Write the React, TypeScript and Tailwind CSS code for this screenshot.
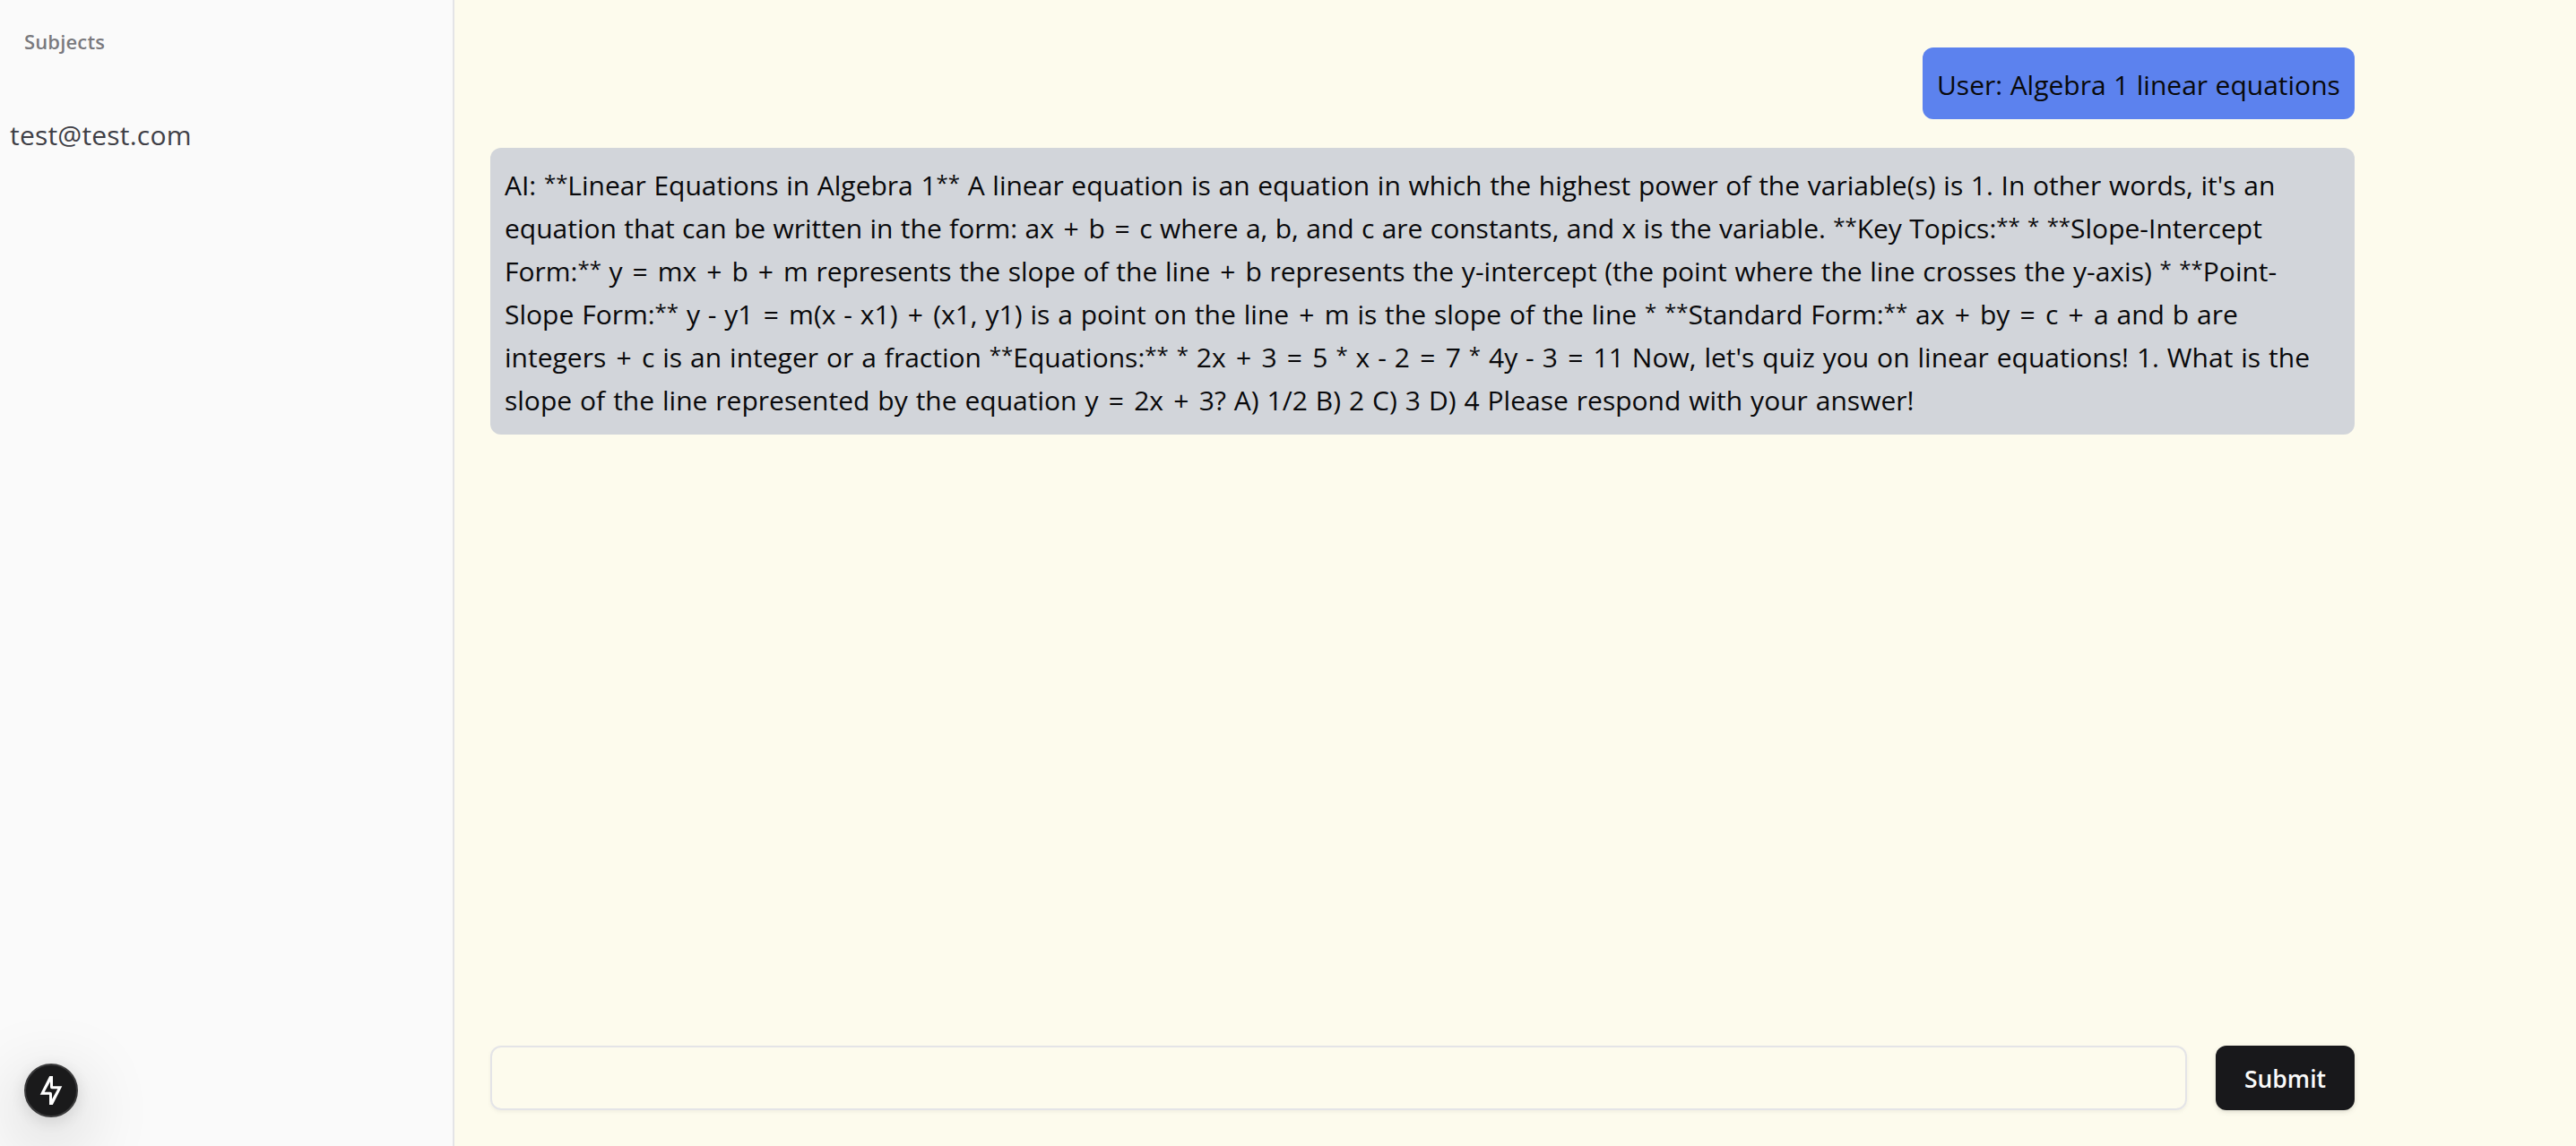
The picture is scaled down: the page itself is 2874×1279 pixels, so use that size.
import { Fragment } from "react";

type Line = { text: string; spacing: string };

const answer: Line[] = [
  {
    text: "AI: **Linear Equations in Algebra 1** A linear equation is an equation in which the highest power of the variable(s) is 1. In other words, it's an",
    spacing: "[word-spacing:0.87px]",
  },
  {
    text: "equation that can be written in the form: ax + b = c where a, b, and c are constants, and x is the variable. **Key Topics:** * **Slope-Intercept",
    spacing: "[word-spacing:0.55px]",
  },
  {
    text: "Form:** y = mx + b + m represents the slope of the line + b represents the y-intercept (the point where the line crosses the y-axis) * **Point-",
    spacing: "[word-spacing:0.87px]",
  },
  {
    text: "Slope Form:** y - y1 = m(x - x1) + (x1, y1) is a point on the line + m is the slope of the line * **Standard Form:** ax + by = c + a and b are",
    spacing: "[word-spacing:1.08px]",
  },
  {
    text: "integers + c is an integer or a fraction **Equations:** * 2x + 3 = 5 * x - 2 = 7 * 4y - 3 = 11 Now, let's quiz you on linear equations! 1. What is the",
    spacing: "[word-spacing:1.15px]",
  },
  {
    text: "slope of the line represented by the equation y = 2x + 3? A) 1/2 B) 2 C) 3 D) 4 Please respond with your answer!",
    spacing: "[word-spacing:1.15px]",
  },
];

// gives + and = a little more room than the font does, and sets * smaller
const MathText: React.FC<{ text: string }> = ({ text }) => {
  return (
    <>
      {text.split(/([+=]|\*+)/).map((part, i) => {
        if (part === "+" || part === "=") {
          return (
            <span key={i} className="px-[2.35px]">
              {part}
            </span>
          );
        }
        if (part.startsWith("*")) {
          return (
            <span key={i} className="align-[5px] text-[24px] leading-none">
              {part}
            </span>
          );
        }
        return <Fragment key={i}>{part}</Fragment>;
      })}
    </>
  );
};

const Sidebar = () => {
  return (
    <aside className="flex w-[507px] shrink-0 flex-col border-r-2 border-[#e4e4e7] bg-[#fafafa]">
      <div className="mt-[14px] flex h-16 items-center px-[27px] text-[22px] font-semibold tracking-[0.15px] text-[#3f3f46]/70">
        Subjects
      </div>
      <div className="mt-[49px] px-[11px] text-[30px] leading-[48px] tracking-[0.2px] text-[#3f3f46]">
        test@test.com
      </div>
    </aside>
  );
};

const DevIndicator = () => {
  return (
    <div className="fixed bottom-8 left-[27px] size-[60px] rounded-full border-2 border-[#3a3a3b] bg-[#1a1a1b] shadow-[0_22px_80px_0_rgba(0,0,0,0.25),0_4px_20px_0_rgba(0,0,0,0.12)]">
      <svg viewBox="2 2 56 56" className="size-full" fill="white">
        <path
          fillRule="evenodd"
          d="M28.2 14H32V25.3H42.3L31.8 46H28V34.7H17.7ZM29 20.3V26.3Q29 28.3 31 28.3H37.3L31 39.7V33.7Q31 31.7 29 31.7H22.7Z"
        />
      </svg>
    </div>
  );
};

export default function App() {
  return (
    <div className="flex h-screen overflow-hidden bg-[#fdfbed] font-['Open_Sans',sans-serif] text-[#09090b]">
      <Sidebar />
      <main className="flex w-[2160px] flex-col px-10 pt-[53px] pb-10">
        <div className="flex grow flex-col gap-8">
          <div className="w-[482px] self-end rounded-xl bg-[#5c82ee] px-4 pt-[18px] pb-[14px] text-[30px] leading-[48px] whitespace-nowrap [word-spacing:0.7px]">
            User: Algebra 1 linear equations
          </div>
          <div className="rounded-xl bg-[#d2d5da] px-4 pt-[18px] pb-[14px] text-[30px] leading-[48px]">
            {answer.map((line) => (
              <p key={line.text} className={`whitespace-nowrap ${line.spacing}`}>
                <MathText text={line.text} />
              </p>
            ))}
          </div>
        </div>
        <form className="flex gap-8" onSubmit={(e) => e.preventDefault()}>
          <input className="h-[72px] min-w-0 grow rounded-xl border-2 border-[#e4e4e7] bg-transparent px-6 shadow-[0_2px_4px_0_rgba(0,0,0,0.05)] outline-none" />
          <button className="h-[72px] w-[155px] rounded-xl bg-[#18181b] pt-[3px] text-[26.5px] font-semibold text-[#fafafa] shadow-[0_2px_6px_0_rgba(0,0,0,0.1),0_2px_4px_-2px_rgba(0,0,0,0.1)]">
            Submit
          </button>
        </form>
      </main>
      <DevIndicator />
    </div>
  );
}
